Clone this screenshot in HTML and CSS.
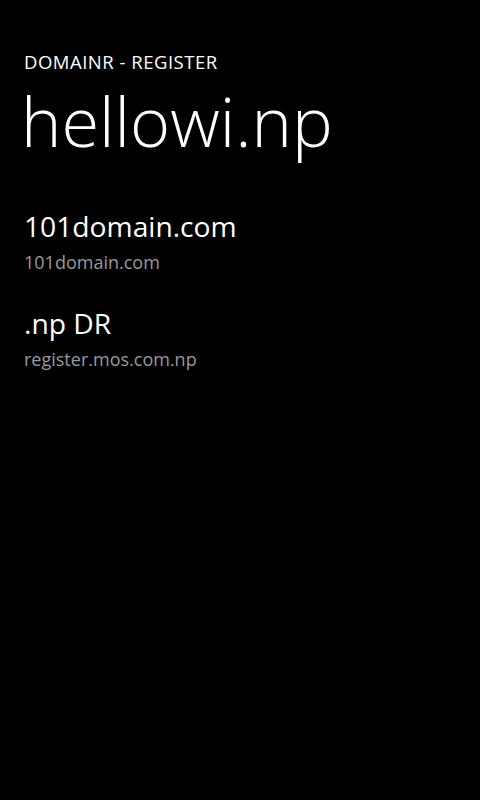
FILE: index.html
```html
<!DOCTYPE html>
<html>
<head>
<meta charset="utf-8">
<link rel="stylesheet" href="styles.css">
</head>
<body>
<div class="page">
  <div class="app-title">DOMAINR - REGISTER</div>
  <div class="page-title">hellowi.np</div>
  <ul class="list">
    <li class="item">
      <div class="item-name">101domain.com</div>
      <div class="item-url">101domain.com</div>
    </li>
    <li class="item">
      <div class="item-name">.np DR</div>
      <div class="item-url">register.mos.com.np</div>
    </li>
  </ul>
</div>
</body>
</html>
```
FILE: styles.css
```css
html, body {
  margin: 0;
  padding: 0;
  background: #000;
  color: #fff;
  font-family: "Open Sans", "Noto Sans", sans-serif;
}
.page {
  width: 480px;
  height: 800px;
  padding: 49px 24px 0 24px;
  box-sizing: border-box;
}
.app-title {
  font-size: 18.5px;
  line-height: normal;
  font-weight: 400;
  letter-spacing: 0.5px;
}
.page-title {
  font-size: 68.5px;
  font-weight: 300;
  line-height: normal;
  margin-left: -3px;
}
.list {
  list-style: none;
  margin: 40.5px 0 0 0;
  padding: 0;
}
.item {
  margin-bottom: 25px;
}
.item-name {
  font-size: 28.2px;
  font-weight: 400;
  line-height: 36px;
}
.item-url {
  font-size: 18px;
  line-height: 36px;
  color: #999;
}
```
